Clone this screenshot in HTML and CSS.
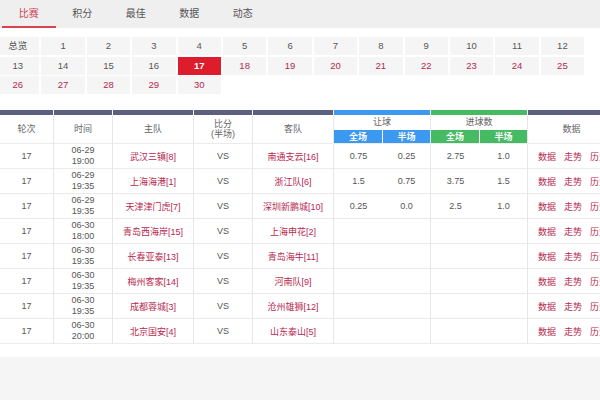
FILE: index.html
```html
<!DOCTYPE html>
<html lang="zh">
<head>
<meta charset="utf-8">
<title>赛程</title>
<link rel="stylesheet" href="styles.css">
</head>
<body>
<div class="page">
  <nav class="tabs">
    <a class="tab active">比赛</a>
    <a class="tab">积分</a>
    <a class="tab">最佳</a>
    <a class="tab">数据</a>
    <a class="tab">动态</a>
  </nav>
  <div class="rounds">
    <span class="r">总览</span><span class="r">1</span><span class="r">2</span><span class="r">3</span><span class="r">4</span><span class="r">5</span><span class="r">6</span><span class="r">7</span><span class="r">8</span><span class="r">9</span><span class="r">10</span><span class="r">11</span><span class="r">12</span>
    <span class="r">13</span><span class="r">14</span><span class="r">15</span><span class="r">16</span><span class="r cur">17</span><span class="r fut">18</span><span class="r fut">19</span><span class="r fut">20</span><span class="r fut">21</span><span class="r fut">22</span><span class="r fut">23</span><span class="r fut">24</span><span class="r fut">25</span>
    <span class="r fut">26</span><span class="r fut">27</span><span class="r fut">28</span><span class="r fut">29</span><span class="r fut">30</span>
  </div>
  <table class="sched">
    <colgroup>
      <col class="c-round"><col class="c-time"><col class="c-team"><col class="c-score"><col class="c-team"><col class="c-sub"><col class="c-sub2"><col class="c-sub"><col class="c-sub2"><col class="c-data">
    </colgroup>
    <thead>
      <tr class="band">
        <td class="dark"></td><td class="dark"></td><td class="dark"></td><td class="dark"></td><td class="dark"></td>
        <td class="blue" colspan="2"></td><td class="green" colspan="2"></td><td class="dark"></td>
      </tr>
      <tr class="h1">
        <th rowspan="2">轮次</th>
        <th rowspan="2">时间</th>
        <th rowspan="2">主队</th>
        <th rowspan="2">比分<br>(半场)</th>
        <th rowspan="2">客队</th>
        <th colspan="2" class="grp">让球</th>
        <th colspan="2" class="grp">进球数</th>
        <th rowspan="2">数据</th>
      </tr>
      <tr class="h2">
        <th class="sub blue">全场</th><th class="sub blue end">半场</th>
        <th class="sub green">全场</th><th class="sub green end">半场</th>
      </tr>
    </thead>
    <tbody>
      <tr><td>17</td><td class="time">06-29<br>19:00</td><td class="team">武汉三镇[8]</td><td>VS</td><td class="team">南通支云[16]</td><td class="in">0.75</td><td>0.25</td><td class="in">2.75</td><td>1.0</td><td class="links"><a>数据</a><a>走势</a><a>历史</a></td></tr>
      <tr><td>17</td><td class="time">06-29<br>19:35</td><td class="team">上海海港[1]</td><td>VS</td><td class="team">浙江队[6]</td><td class="in">1.5</td><td>0.75</td><td class="in">3.75</td><td>1.5</td><td class="links"><a>数据</a><a>走势</a><a>历史</a></td></tr>
      <tr><td>17</td><td class="time">06-29<br>19:35</td><td class="team">天津津门虎[7]</td><td>VS</td><td class="team">深圳新鹏城[10]</td><td class="in">0.25</td><td>0.0</td><td class="in">2.5</td><td>1.0</td><td class="links"><a>数据</a><a>走势</a><a>历史</a></td></tr>
      <tr><td>17</td><td class="time">06-30<br>18:00</td><td class="team">青岛西海岸[15]</td><td>VS</td><td class="team">上海申花[2]</td><td class="in"></td><td></td><td class="in"></td><td></td><td class="links"><a>数据</a><a>走势</a><a>历史</a></td></tr>
      <tr><td>17</td><td class="time">06-30<br>19:35</td><td class="team">长春亚泰[13]</td><td>VS</td><td class="team">青岛海牛[11]</td><td class="in"></td><td></td><td class="in"></td><td></td><td class="links"><a>数据</a><a>走势</a><a>历史</a></td></tr>
      <tr><td>17</td><td class="time">06-30<br>19:35</td><td class="team">梅州客家[14]</td><td>VS</td><td class="team">河南队[9]</td><td class="in"></td><td></td><td class="in"></td><td></td><td class="links"><a>数据</a><a>走势</a><a>历史</a></td></tr>
      <tr><td>17</td><td class="time">06-30<br>19:35</td><td class="team">成都蓉城[3]</td><td>VS</td><td class="team">沧州雄狮[12]</td><td class="in"></td><td></td><td class="in"></td><td></td><td class="links"><a>数据</a><a>走势</a><a>历史</a></td></tr>
      <tr><td>17</td><td class="time">06-30<br>20:00</td><td class="team">北京国安[4]</td><td>VS</td><td class="team">山东泰山[5]</td><td class="in"></td><td></td><td class="in"></td><td></td><td class="links"><a>数据</a><a>走势</a><a>历史</a></td></tr>
    </tbody>
  </table>
</div>
</body>
</html>
```

FILE: styles.css
```css
html, body {
  margin: 0;
  padding: 0;
  overflow: hidden;
}
body {
  background: #f5f5f5;
  font-family: "Liberation Sans", "Noto Sans CJK SC", sans-serif;
  color: #555;
}
.page {
  width: 600px;
  background: #fff;
  padding-bottom: 13px;
  overflow: hidden;
}
.tabs {
  display: flex;
  height: 28px;
  background: #efefef;
  padding-left: 2px;
}
.tab {
  width: 53.5px;
  box-sizing: border-box;
  text-align: center;
  font-size: 10px;
  line-height: 27px;
  color: #555;
  border-bottom: 2px solid transparent;
}
.tab.active {
  color: #d0455a;
  border-bottom-color: #d9434f;
}
.rounds {
  display: grid;
  grid-template-columns: repeat(13, 43.4px);
  column-gap: 2px;
  row-gap: 1.5px;
  margin: 9px 0 0 -4px;
}
.r {
  height: 18px;
  line-height: 18px;
  text-align: center;
  background: #f5f5f5;
  font-size: 9.5px;
  color: #555;
}
.r.cur {
  background: #dd1c2c;
  color: #fff;
  font-weight: bold;
}
.r.fut {
  color: #b3294e;
}
.sched {
  margin-top: 16px;
  width: 616px;
  table-layout: fixed;
  border-collapse: separate;
  border-spacing: 0;
  font-size: 9px;
}
.c-round { width: 54px; }
.c-time { width: 59px; }
.c-team { width: 81px; }
.c-score { width: 59px; }
.c-sub { width: 49px; }
.c-sub2 { width: 48px; }
.c-data { width: 88px; }
.band td {
  height: 5px;
  padding: 0;
  border-right: 1px solid #fff;
}
.band .dark { background: #5b5f80; }
.band .blue { background: #3d98ef; }
.band .green { background: #47bb63; }
th {
  font-weight: normal;
  color: #666;
  padding: 0;
  line-height: 10px;
  border-right: 1px solid #e6e6e6;
  border-bottom: 1px solid #ebebeb;
}
.h1 th.grp {
  height: 14px;
  border-bottom: 0;
}
.h2 th.sub {
  height: 13px;
  color: #fff;
  font-weight: bold;
  border-top: 1px solid #fff;
  border-right: 1px solid #fff;
}
.h2 th.sub.end {
  border-right: 1px solid #e6e6e6;
}
.h2 th.blue { background: #3d98ef; }
.h2 th.green { background: #47bb63; }
tbody td {
  height: 24px;
  padding: 0;
  text-align: center;
  color: #555;
  border-right: 1px solid #e6e6e6;
  border-bottom: 1px solid #ebebeb;
}
tbody td.in {
  border-right: 0;
}
td.time {
  line-height: 11px;
}
td.team {
  color: #b8284f;
}
td.links {
  text-align: left;
  padding-left: 10px;
  white-space: nowrap;
}
td.links a {
  color: #b8284f;
  margin-right: 8px;
}
```
